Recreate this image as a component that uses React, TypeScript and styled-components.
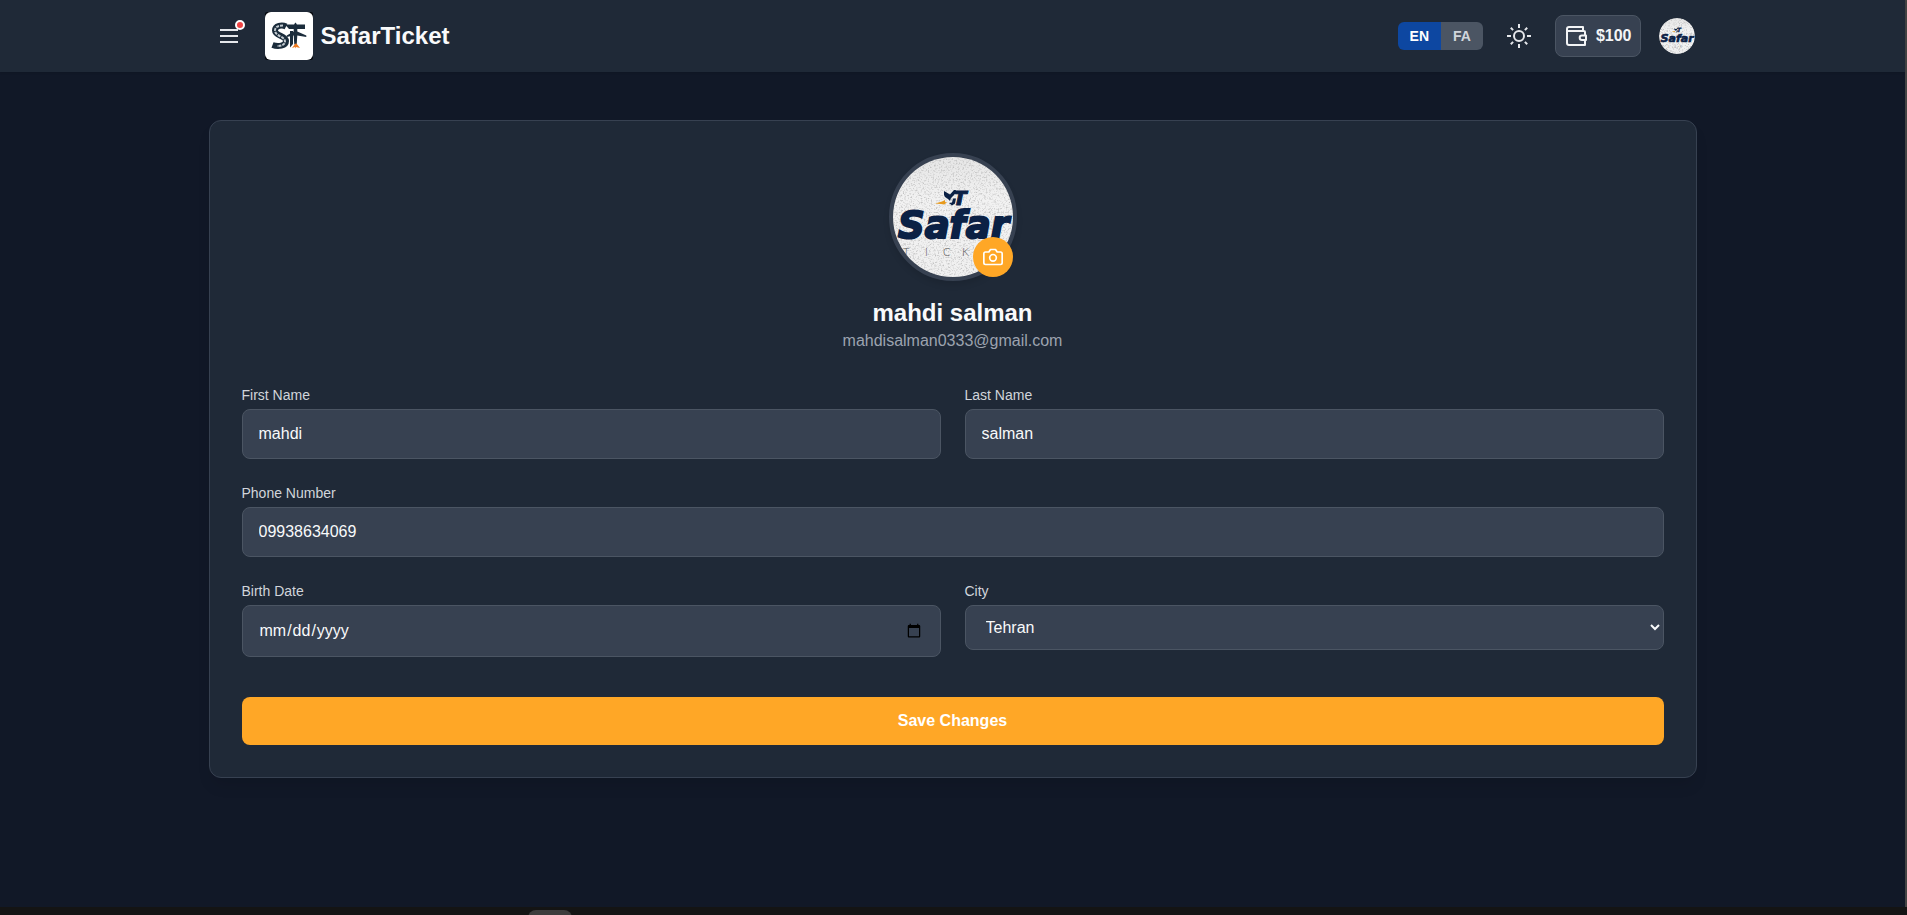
import React, { useId, useState } from "react";
import styled, { createGlobalStyle } from "styled-components";

const color = {
  page: "#111827",
  surface: "#1f2937",
  field: "#374151",
  line: "#4b5563",
  text: "#f9fafb",
  label: "#d1d5db",
  muted: "#9ca3af",
  accent: "#ffa726",
  blue: "#0d47a1",
  navy: "#0b2145",
};

const GlobalStyle = createGlobalStyle`
  *, *::before, *::after { box-sizing: border-box; }
  body {
    margin: 0;
    background: #141414;
    color: ${color.text};
    font-family: "Liberation Sans", Arial, sans-serif;
    font-size: 16px;
    line-height: 24px;
  }
  button, input, select { font: inherit; color: inherit; margin: 0; }
  button { cursor: pointer; }
`;

const Shell = styled.div`
  display: flex;
  flex-direction: column;
  min-height: 100vh;
`;

const Page = styled.div`
  flex: 1;
  background: ${color.page};
  border-right: 2px solid #444444;
`;

const TopBar = styled.header`
  background: ${color.surface};
  box-shadow: 0 1px 2px rgba(0, 0, 0, 0.1);
`;

const Container = styled.div`
  max-width: 1536px;
  margin: 0 auto;
  padding: 0 24px;
`;

const BarContent = styled(Container)`
  display: flex;
  align-items: center;
  justify-content: space-between;
  height: 72px;
`;

const BarGroup = styled.div`
  display: flex;
  align-items: center;
  gap: 16px;
`;

const IconButton = styled.button`
  position: relative;
  display: flex;
  padding: 8px;
  border: 0;
  border-radius: 8px;
  background: none;
  color: #e5e7eb;
`;

const AlertDot = styled.span`
  position: absolute;
  top: 4px;
  right: 4px;
  width: 10px;
  height: 10px;
  border: 2px solid #ffffff;
  border-radius: 50%;
  background: #ef4444;
`;

const Brand = styled.a`
  display: flex;
  align-items: center;
  gap: 8px;
  color: ${color.text};
  font-size: 24px;
  font-weight: 700;
  line-height: 32px;
  text-decoration: none;
`;

const LanguageSwitch = styled.div`
  display: flex;
  overflow: hidden;
  border-radius: 6px;
`;

const LanguageButton = styled.button<{ $active: boolean }>`
  padding: 4px 12px;
  border: 0;
  background: ${(p) => (p.$active ? color.blue : color.line)};
  color: ${(p) => (p.$active ? "#ffffff" : color.label)};
  font-size: 14px;
  font-weight: 700;
  line-height: 20px;
`;

const WalletButton = styled.button`
  display: flex;
  align-items: center;
  gap: 8px;
  padding: 8px;
  border: 1px solid ${color.line};
  border-radius: 8px;
  background: ${color.field};
  color: #f3f4f6;
  font-weight: 700;
`;

const AvatarButton = styled.button`
  display: flex;
  width: 40px;
  height: 40px;
  padding: 0;
  overflow: hidden;
  border: 2px solid transparent;
  border-radius: 50%;
  background: none;
`;

const Main = styled.main`
  padding: 48px 0;
`;

const Card = styled.section`
  padding: 32px;
  border: 1px solid ${color.field};
  border-radius: 12px;
  background: ${color.surface};
  box-shadow: 0 10px 15px -3px rgba(0, 0, 0, 0.1);
`;

const Profile = styled.div`
  display: flex;
  flex-direction: column;
  align-items: center;
  margin-bottom: 32px;
`;

const Portrait = styled.div`
  position: relative;
  display: flex;
  width: 128px;
  height: 128px;
  margin-bottom: 16px;
  border: 4px solid ${color.field};
  border-radius: 50%;
  box-shadow: 0 4px 6px rgba(0, 0, 0, 0.1);
`;

const CameraButton = styled.button`
  position: absolute;
  right: 0;
  bottom: 0;
  display: flex;
  align-items: center;
  justify-content: center;
  width: 40px;
  height: 40px;
  padding: 0;
  border: 0;
  border-radius: 50%;
  background: ${color.accent};
  color: #ffffff;
`;

const Name = styled.h1`
  margin: 0;
  font-size: 24px;
  line-height: 32px;
`;

const Email = styled.p`
  margin: 0;
  color: ${color.muted};
`;

const Form = styled.form`
  display: grid;
  grid-template-columns: 1fr 1fr;
  align-items: start;
  gap: 24px;
`;

const Field = styled.div<{ $wide?: boolean }>`
  display: flex;
  flex-direction: column;
  gap: 4px;
  min-width: 0;
  grid-column: ${(p) => (p.$wide ? "1 / -1" : "auto")};
`;

const Label = styled.label`
  color: ${color.label};
  font-size: 14px;
  line-height: 20px;
`;

const Input = styled.input`
  width: 100%;
  padding: 12px 16px;
  border: 1px solid ${color.line};
  border-radius: 8px;
  background: ${color.field};
`;

const Select = styled.select`
  width: 100%;
  padding: 12px 16px;
  border: 1px solid ${color.line};
  border-radius: 8px;
  background: ${color.field};
`;

const SaveButton = styled.button`
  grid-column: 1 / -1;
  margin-top: 16px;
  padding: 12px 24px;
  border: 0;
  border-radius: 8px;
  background: ${color.accent};
  color: #ffffff;
  font-weight: 700;
`;

const Dock = styled.div`
  height: 8px;
  padding: 3px 0 0 528px;
  overflow: hidden;
  background: #141414;
`;

const DockTab = styled.div`
  width: 44px;
  height: 16px;
  border-radius: 8px;
  background: #3d3d3d;
`;

const MenuIcon = () => (
  <svg width="24" height="24" viewBox="0 0 24 24" fill="none" stroke="currentColor" strokeWidth="2" aria-hidden="true">
    <path d="M3 6h18M3 12h18M3 18h18" />
  </svg>
);

const SunIcon = () => (
  <svg width="24" height="24" viewBox="0 0 24 24" fill="none" stroke="currentColor" strokeWidth="2" aria-hidden="true">
    <circle cx="12" cy="12" r="5" />
    <path d="M12 0v4M12 20v4M0 12h4M20 12h4M3.8 3.8l2.3 2.3M17.9 17.9l2.3 2.3M3.8 20.2l2.3-2.3M17.9 6.1l2.3-2.3" />
  </svg>
);

const WalletIcon = () => (
  <svg width="24" height="24" viewBox="0 0 24 24" fill="none" stroke="currentColor" strokeWidth="2" strokeLinejoin="round" aria-hidden="true">
    <path d="M19 7V3H5a2 2 0 0 0-2 2v14a2 2 0 0 0 2 2h16v-4M3 7h17a1 1 0 0 1 1 1v3" />
    <path d="M22 11.500h-4a2.300 2.300 0 0 0 0 4.600h4z" />
  </svg>
);

const CameraIcon = () => (
  <svg width="20" height="20" viewBox="0 0 24 24" fill="none" stroke="currentColor" strokeWidth="2" strokeLinecap="round" strokeLinejoin="round" aria-hidden="true">
    <path d="M23 19a2 2 0 0 1-2 2H3a2 2 0 0 1-2-2V8a2 2 0 0 1 2-2h4l2-3h6l2 3h4a2 2 0 0 1 2 2z" />
    <circle cx="12" cy="13" r="4" />
  </svg>
);

const BrandLogo = () => (
  <svg width="48" height="48" viewBox="0 0 48 48" aria-hidden="true">
    <rect width="48" height="48" rx="2" fill="#05080d" />
    <rect width="48" height="48" rx="6" fill="#ffffff" />
    {/* winding road */}
    <path d="M21 14.500C17 12.500 10 13.500 10 18.500c0 5.500 11 5 11 10.500 0 5-8 6-13.500 4" fill="none" stroke="#1b2c3b" strokeWidth="6" />
    <path d="M18 13.500C13 13.500 10 15 10 18.500c0 5.500 10 6 10 11 0 3-3 4.500-8 4.500" fill="none" stroke="#c3cad0" strokeWidth="2" strokeDasharray="3 1" />
    {/* runway beam and post behind the plane */}
    <path d="M20 12.500h20v4.500H24z" fill="#1b2c3b" />
    <path d="M25 19h3v13l-3 3.500z" fill="#1b2c3b" />
    {/* plane pointing up */}
    <path d="M30.500 10.500c1.300 1 1.800 3 1.800 5v4l9 4v1.500l-9-1.500-.6 9h-2.400l-.6-9-7 1.500v-1.500l7-4v-4c0-2 .5-4 1.800-5z" fill="#1b2c3b" />
    <path d="M30.500 31.500l-3.500 4.500 3-1 .5 1.500.5-1.500 4 1-3.500-4.500z" fill="#ee7a1f" />
  </svg>
);

const SafarPicture = ({ size }: { size: number }) => {
  const id = useId();
  return (
    <svg width={size} height={size} viewBox="0 0 120 120" role="img" aria-label="Profile picture">
      <defs>
        <clipPath id={`${id}c`}>
          <circle cx="60" cy="60" r="60" />
        </clipPath>
        <filter id={`${id}n`} x="0" y="0" width="100%" height="100%">
          <feTurbulence type="fractalNoise" baseFrequency="0.6" numOctaves="3" seed="4" />
          <feColorMatrix values="0 0 0 0 0.45  0 0 0 0 0.45  0 0 0 0 0.45  0 2 0 0 -0.95" />
        </filter>
        <linearGradient id={`${id}g`} x2="0" y2="1">
          <stop offset="0" stopColor="#e6e6e6" />
          <stop offset="0.35" stopColor="#f2f2f2" />
          <stop offset="1" stopColor="#f0f0f0" />
        </linearGradient>
      </defs>
      <g clipPath={`url(#${id}c)`}>
        <rect width="120" height="120" fill={`url(#${id}g)`} />
        <rect width="120" height="120" filter={`url(#${id}n)`} />
        {/* plane with its orange trail */}
        <path d="M51 34l6 3.500 4-4.500 2 0-2 5-3 3-1 3-2-2-3-2-1-2zM56 46l3-.5 1-4 3 0-1 5-3 2z" fill={color.navy} />
        <path d="M42 46.500l7-2 3-1.500v2l2 .5-3 2-3-.5z" fill="#e79a1c" />
        <text fontFamily="DejaVu Sans, sans-serif" fontStyle="italic" fontWeight="700" fill={color.navy} stroke={color.navy}>
          <tspan x="60" y="48" fontSize="20" strokeWidth="1">T</tspan>
          <tspan x="5" y="81" fontSize="37" strokeWidth="2">Safar</tspan>
        </text>
        <text x="10 32 50 69" y="99" fontFamily="Lato, sans-serif" fontWeight="300" fontSize="11" fill="#555555">TICK</text>
      </g>
    </svg>
  );
};

const languages = ["EN", "FA"];
const cities = ["Tehran", "Mashhad", "Isfahan", "Shiraz", "Tabriz"];

export default function App() {
  const [language, setLanguage] = useState("EN");

  return (
    <Shell>
      <GlobalStyle />
      <Page>
        <TopBar>
          <BarContent>
            <BarGroup>
              <IconButton type="button" aria-label="Menu">
                <MenuIcon />
                <AlertDot />
              </IconButton>
              <Brand href="#">
                <BrandLogo />
                SafarTicket
              </Brand>
            </BarGroup>
            <BarGroup>
              <LanguageSwitch>
                {languages.map((l) => (
                  <LanguageButton key={l} type="button" $active={l === language} onClick={() => setLanguage(l)}>
                    {l}
                  </LanguageButton>
                ))}
              </LanguageSwitch>
              <IconButton type="button" aria-label="Light theme">
                <SunIcon />
              </IconButton>
              <WalletButton type="button">
                <WalletIcon />
                $100
              </WalletButton>
              <AvatarButton type="button" aria-label="Account">
                <SafarPicture size={36} />
              </AvatarButton>
            </BarGroup>
          </BarContent>
        </TopBar>
        <Main>
          <Container>
            <Card>
              <Profile>
                <Portrait>
                  <SafarPicture size={120} />
                  <CameraButton type="button" aria-label="Change picture">
                    <CameraIcon />
                  </CameraButton>
                </Portrait>
                <Name>mahdi salman</Name>
                <Email>mahdisalman0333@gmail.com</Email>
              </Profile>
              <Form onSubmit={(e) => e.preventDefault()}>
                <Field>
                  <Label htmlFor="first">First Name</Label>
                  <Input id="first" defaultValue="mahdi" />
                </Field>
                <Field>
                  <Label htmlFor="last">Last Name</Label>
                  <Input id="last" defaultValue="salman" />
                </Field>
                <Field $wide>
                  <Label htmlFor="phone">Phone Number</Label>
                  <Input id="phone" type="tel" defaultValue="09938634069" />
                </Field>
                <Field>
                  <Label htmlFor="birth">Birth Date</Label>
                  <Input id="birth" type="date" />
                </Field>
                <Field>
                  <Label htmlFor="city">City</Label>
                  <Select id="city" defaultValue="Tehran">
                    {cities.map((c) => (
                      <option key={c}>{c}</option>
                    ))}
                  </Select>
                </Field>
                <SaveButton type="submit">Save Changes</SaveButton>
              </Form>
            </Card>
          </Container>
        </Main>
      </Page>
      <Dock>
        <DockTab />
      </Dock>
    </Shell>
  );
}
